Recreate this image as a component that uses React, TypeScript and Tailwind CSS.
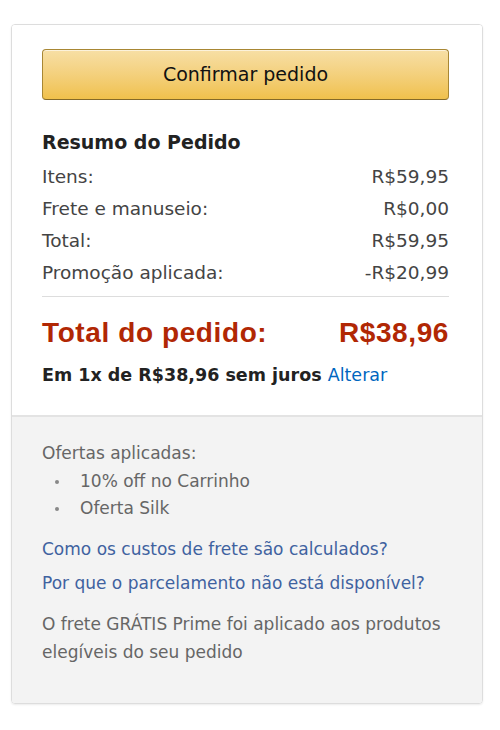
import React from 'react';

const rows = [
  { label: 'Itens:', value: 'R$59,95' },
  { label: 'Frete e manuseio:', value: 'R$0,00' },
  { label: 'Total:', value: 'R$59,95' },
  { label: 'Promoção aplicada:', value: '-R$20,99' },
];

const App = () => {
  return (
    <div className="min-h-[730px] bg-white pt-[24px] font-['DejaVu_Sans',Verdana,sans-serif]">
      <div className="ml-[11px] w-[472px] rounded-[4px] border border-[#dddddd] shadow-[0_1px_2px_rgba(0,0,0,0.08)] overflow-hidden">
        {/* resumo */}
        <div className="bg-white pt-[24px] pb-[28px] pl-[30px] pr-[33px] border-b-2 border-[#e3e3e3]">
          <button className="block w-full h-[51px] rounded-[4px] border border-[#a88734] border-b-[#846a29] bg-gradient-to-b from-[#f7dfa5] to-[#f0c14b] text-[19px] text-[#111] shadow-[inset_0_1px_0_rgba(255,255,255,0.6)]">
            Confirmar pedido
          </button>

          <h3 className="mt-[30px] mb-[7px] text-[19px] leading-[24px] font-bold text-[#222]">
            Resumo do Pedido
          </h3>

          {rows.map((r) => (
            <div key={r.label} className="flex justify-between text-[18.5px] leading-[32px] text-[#444]">
              <span>{r.label}</span>
              <span>{r.value}</span>
            </div>
          ))}

          <div className="mt-[7px] border-t border-[#dddddd]" />

          <div className="mt-[18px] flex justify-between font-['Liberation_Sans',Arial,sans-serif] text-[28px] tracking-[0.6px] leading-[36px] font-bold text-[#b12704]">
            <span>Total do pedido:</span>
            <span>R$38,96</span>
          </div>

          <p className="mt-[12px] text-[17.5px] leading-[24px] font-bold text-[#222]">
            Em 1x de R$38,96 sem juros <span className="font-normal text-[#0066c0]">Alterar</span>
          </p>
        </div>

        {/* ofertas */}
        <div className="bg-[#f3f3f3] pt-[24px] pb-[37px] pl-[30px] pr-[20px] text-[17px] text-[#666]">
          <p className="leading-[24px]">Ofertas aplicadas:</p>
          <ul className="mt-[3px] leading-[27px]">
            <li className="flex items-center">
              <span className="ml-[13px] w-[4px] h-[4px] rounded-full bg-[#888]" />
              <span className="ml-[21px]">10% off no Carrinho</span>
            </li>
            <li className="flex items-center">
              <span className="ml-[13px] w-[4px] h-[4px] rounded-full bg-[#888]" />
              <span className="ml-[21px]">Oferta Silk</span>
            </li>
          </ul>
          <p className="mt-[15px] leading-[24px] text-[#3f62a0]">Como os custos de frete são calculados?</p>
          <p className="mt-[10px] leading-[24px] text-[#3f62a0]">Por que o parcelamento não está disponível?</p>
          <p className="mt-[15px] leading-[28px]">
            O frete GRÁTIS Prime foi aplicado aos produtos elegíveis do seu pedido
          </p>
        </div>
      </div>
    </div>
  );
};

export default App;
